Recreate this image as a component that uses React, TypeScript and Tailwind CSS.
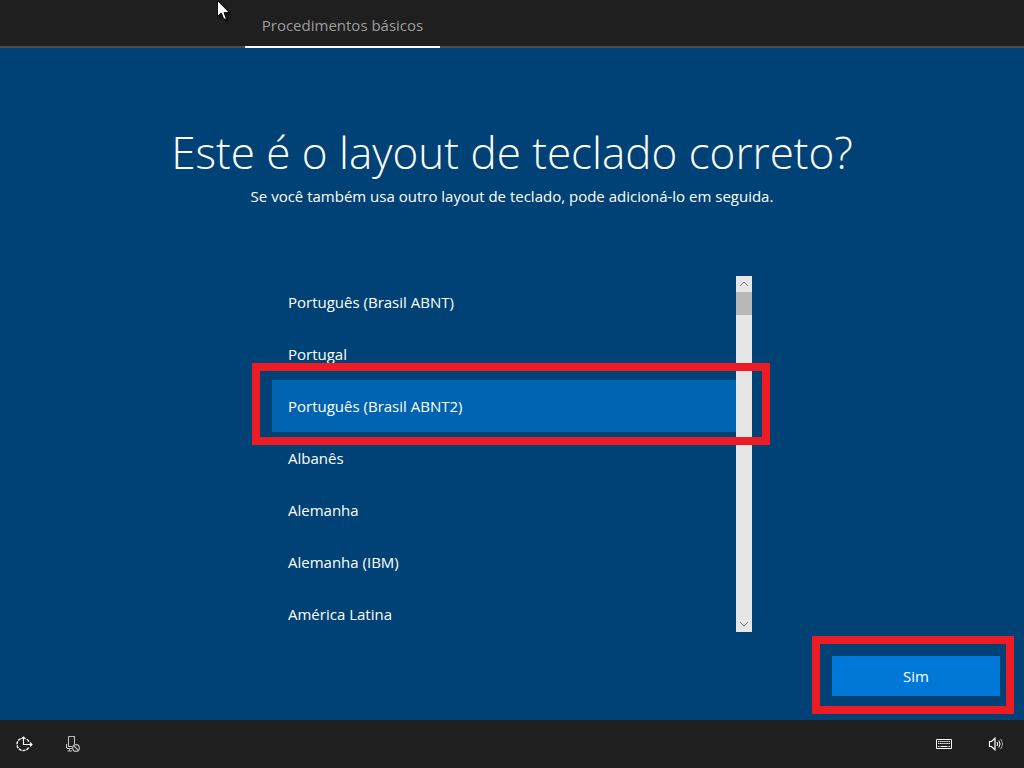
import { useState } from "react";

const layouts = [
  "Português (Brasil ABNT)",
  "Portugal",
  "Português (Brasil ABNT2)",
  "Albanês",
  "Alemanha",
  "Alemanha (IBM)",
  "América Latina",
];

function Pointer() {
  return (
    <svg
      className="pointer-events-none absolute top-0 left-[217px] drop-shadow-[2px_2px_1px_rgba(0,0,0,0.6)]"
      width="13"
      height="20"
      viewBox="0 0 13 20"
      aria-hidden="true"
    >
      <path
        d="M0.5 0.5V16.5L4.2 13L6.8 19H9.4L7 12.5H12.2Z"
        fill="#fff"
        stroke="#111"
        strokeWidth="1"
      />
    </svg>
  );
}

function Header() {
  return (
    <header className="relative flex h-12 bg-[#1f1f1f]">
      <div className="w-[245px] border-b-2 border-[#4c4c4c]" />
      <div className="flex w-[195px] items-center justify-center border-b-2 border-white pt-1 text-[15px] text-[#9d9d9d]">
        Procedimentos básicos
      </div>
      <div className="flex-1 border-b-2 border-[#4c4c4c]" />
      <Pointer />
    </header>
  );
}

function ScrollBar() {
  return (
    <div className="flex w-4 flex-col bg-[#e6e6e6]">
      <button type="button" aria-label="Rolar para cima" className="flex h-4 items-center justify-center">
        <svg width="10" height="6" viewBox="0 0 10 6" fill="none" stroke="#777" aria-hidden="true">
          <path d="M1 5L5 1L9 5" />
        </svg>
      </button>
      <div className="h-[23px] bg-[#b9b9b9]" />
      <div className="flex-1" />
      <button type="button" aria-label="Rolar para baixo" className="flex h-4 items-center justify-center">
        <svg width="10" height="6" viewBox="0 0 10 6" fill="none" stroke="#777" aria-hidden="true">
          <path d="M1 1L5 5L9 1" />
        </svg>
      </button>
    </div>
  );
}

function LayoutList() {
  const [selected, setSelected] = useState(layouts[2]);
  return (
    <div className="relative mx-auto mt-[68px] flex h-[356px] w-full max-w-[480px]">
      <fieldset className="min-w-0 flex-1 overflow-hidden" aria-labelledby="title">
        {layouts.map((name) => (
          <label key={name} className="flex h-[52px] items-center px-4 text-[15px] has-checked:bg-[#0063b1]">
            <input
              type="radio"
              name="layout"
              className="appearance-none"
              checked={selected === name}
              onChange={() => setSelected(name)}
            />
            {name}
          </label>
        ))}
      </fieldset>
      <ScrollBar />
      <div className="pointer-events-none absolute top-[87px] -right-[18px] -left-5 h-[82px] border-8 border-[#ed1c24]" />
    </div>
  );
}

function Footer() {
  return (
    <footer className="flex h-12 items-center justify-between bg-[#1f1f1f] px-4 text-white">
      <div className="flex items-center gap-8">
        <button type="button" aria-label="Facilidade de acesso">
          <svg width="17" height="16" viewBox="0 0 17 16" fill="none" stroke="currentColor" aria-hidden="true">
            <path d="M7.5 1V8.5H16M14 6.5L16 8.5L14 10.5M5.5 3L7.5 1L9.5 3" strokeWidth="1.1" />
            <path d="M4.6 2.6A6.3 6.3 0 1 0 13 11" strokeWidth="1.4" strokeDasharray="3 1" />
            <path d="M10.8 3.2A6.3 6.3 0 0 1 12.9 5.6" strokeWidth="1.3" />
          </svg>
        </button>
        <button type="button" aria-label="Microfone desativado" className="text-[#bdbdbd]">
          <svg width="16" height="18" viewBox="0 0 16 18" fill="none" stroke="currentColor" aria-hidden="true">
            <path d="M3.5 1.5H9.5V9M3.5 1.5V11.5H7M1.5 9V12.5L2.5 13.5H7M4.5 13.5V16M2.5 16H7" strokeWidth="1.1" />
            <circle cx="11" cy="13" r="3.3" strokeWidth="1.2" />
            <path d="M8.8 10.8L13.2 15.2" strokeWidth="1.2" />
          </svg>
        </button>
      </div>
      <div className="flex items-center gap-9">
        <button type="button" aria-label="Teclado virtual">
          <svg width="16" height="10" viewBox="0 0 16 10" fill="none" stroke="currentColor" aria-hidden="true">
            <path d="M0.5 0.5H15.5V9.5H0.5Z" />
            <path d="M2 2.5H14M2 4.5H14" strokeDasharray="1.4 0.7" />
            <path d="M2 7.5H3.5M4.5 7.5H11.5M12.5 7.5H14" />
          </svg>
        </button>
        <button type="button" aria-label="Volume" className="mr-1">
          <svg width="16" height="14" viewBox="0 0 16 14" fill="none" stroke="currentColor" aria-hidden="true">
            <path d="M1.5 4.5H3.5L7 1.2V12.8L3.5 9.5H1.5Z" strokeWidth="1.2" />
            <path d="M9 5Q10.4 7 9 9" />
            <path d="M10.8 3.5Q13.2 7 10.8 10.5" />
            <path d="M12.6 2Q16.2 7 12.6 12" stroke="#a8a8a8" />
          </svg>
        </button>
      </div>
    </footer>
  );
}

export default function App() {
  return (
    <div className="flex min-h-screen flex-col bg-[#004275] font-['Segoe_UI','Open_Sans',sans-serif] text-white">
      <Header />
      <main className="flex flex-1 flex-col pt-[72px]">
        <h1 id="title" className="text-center text-[44px] leading-[64px] font-light">
          Este é o layout de teclado correto?
        </h1>
        <p className="text-center text-[15px] leading-6">
          Se você também usa outro layout de teclado, pode adicioná-lo em seguida.
        </p>
        <LayoutList />
        <div className="mt-auto flex justify-end px-6 pt-6 pb-6">
          <div className="relative flex">
            <button type="button" className="h-10 w-[168px] bg-[#0078d7] text-[15px]">
              Sim
            </button>
            <div className="pointer-events-none absolute -top-5 -right-[14px] -bottom-[18px] -left-5 border-8 border-[#ed1c24]" />
          </div>
        </div>
      </main>
      <Footer />
    </div>
  );
}
